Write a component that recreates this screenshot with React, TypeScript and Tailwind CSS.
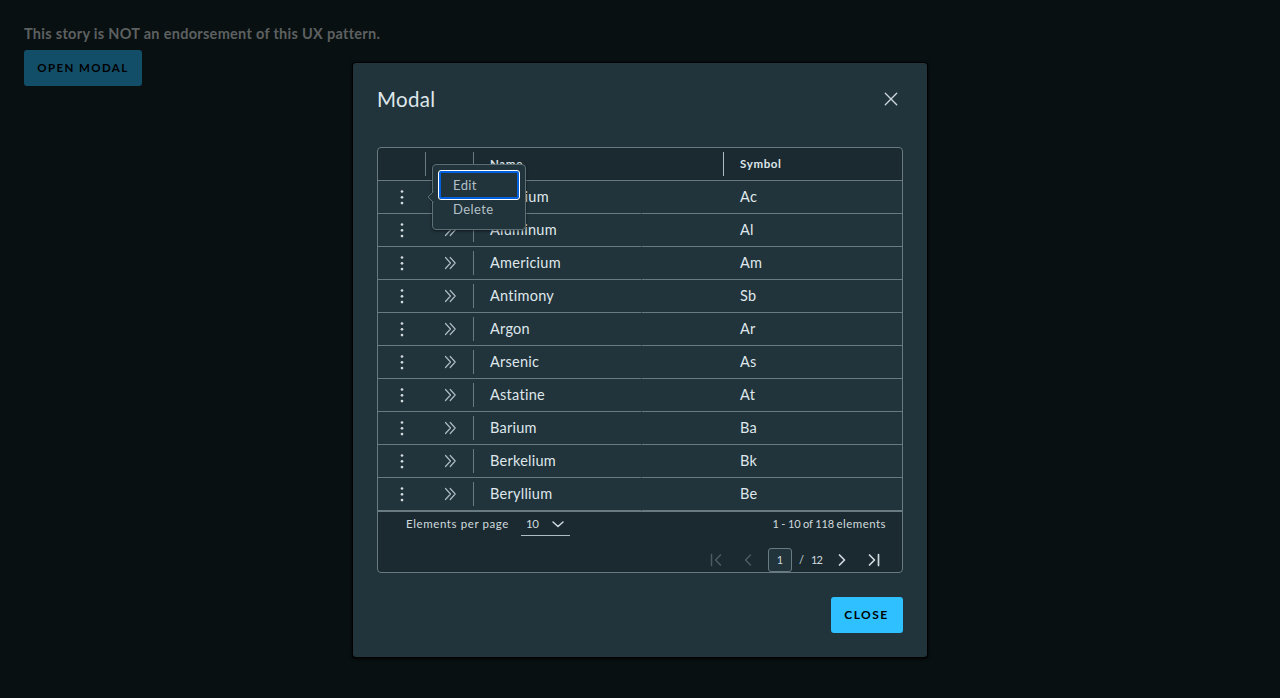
import React from "react";

const ROWS: [string, string][] = [
  ["Actinium", "Ac"],
  ["Aluminum", "Al"],
  ["Americium", "Am"],
  ["Antimony", "Sb"],
  ["Argon", "Ar"],
  ["Arsenic", "As"],
  ["Astatine", "At"],
  ["Barium", "Ba"],
  ["Berkelium", "Bk"],
  ["Beryllium", "Be"],
];

function Icon({ d, className, size = 16, width = 1.5 }: { d: string; className: string; size?: number; width?: number }) {
  return (
    <svg width={size} height={size} viewBox={`0 0 ${size} ${size}`} className={className} fill="none" stroke="currentColor" strokeWidth={width} strokeLinecap="round" strokeLinejoin="round">
      <path d={d} />
    </svg>
  );
}

function Dots() {
  return (
    <svg width="16" height="16" viewBox="0 0 16 16" className="text-[#d3dbdf]" fill="currentColor">
      <circle cx="8" cy="2.5" r="1.35" />
      <circle cx="8" cy="8.3" r="1.35" />
      <circle cx="8" cy="14.1" r="1.35" />
    </svg>
  );
}

function ActionMenu() {
  return (
    <div className="absolute left-[54px] top-[16px] z-10 h-[66px] w-[94px] rounded-[4px] border border-[#5c6f76] bg-[#21333b] px-[5px] pt-[5px] text-[13px] tracking-[0.4px] text-[#b3c0c7] shadow-[0_1px_3px_#0008]">
      <svg width="7" height="12" viewBox="0 0 7 12" className="absolute -left-[6px] top-[26px]">
        <path d="M6.5 0.5 L1 6 L6.5 11.5" fill="#21333b" stroke="#5c6f76" />
      </svg>
      <div className="flex h-[30px] w-[82px] items-center rounded-[3px] border border-white pl-[14px] pt-[2px] shadow-[inset_0_0_0_2px_#0061e0]">Edit</div>
      <div className="flex h-[19px] items-center pl-[15px]">Delete</div>
    </div>
  );
}

export default function App() {
  return (
    <div className="flex h-[698px] w-full flex-col items-start overflow-hidden bg-[#091012] px-6 pt-6 font-['Lato','Liberation_Sans',sans-serif]">
      <p className="h-[20px] whitespace-nowrap text-[14.5px] font-bold leading-[20px] tracking-[0.29px] text-[#5d6060]">This story is NOT an endorsement of this UX pattern.</p>
      <button className="mt-[6px] h-9 w-[118px] rounded-[3px] bg-[#134e68] text-[11.5px] font-bold tracking-[1.4px] text-black">OPEN MODAL</button>

      <div role="dialog" className="absolute left-[353px] top-[63px] flex h-[594px] w-[574px] flex-col rounded-[3px] bg-[#21333b] p-6 text-[#dfe7eb] shadow-[0_0_0_1px_#000,0_1px_3px_1px_#000]">
        <header className="flex h-6 items-center justify-between">
          <h1 className="text-[20.5px] leading-6 tracking-[0.3px]">Modal</h1>
          <Icon className="mr-1 text-[#cfd9dd]" width={1.3} d="M2.3 2.3 L13.7 13.7 M13.7 2.3 L2.3 13.7" />
        </header>

        <section className="relative mt-9 flex h-[426px] flex-col rounded-[4px] border border-[#6a7a81] bg-[#1b2a31]">
          <div className="flex h-[33px] items-center border-b border-[#6a7a81] text-[11.5px] font-bold tracking-[0.65px]">
            <div className="h-6 w-12 border-r border-[#6a7a81]" />
            <div className="h-6 w-12 border-r border-[#6a7a81]" />
            <div className="flex h-6 w-[250px] items-center border-r border-[#adbbc4] pl-4">Name</div>
            <div className="pl-4">Symbol</div>
          </div>
          {ROWS.map(([name, symbol]) => (
            <div key={name} className="relative flex h-[33px] shrink-0 items-center border-b border-[#6a7a81] bg-[#21333b] text-[14.5px] tracking-[0.26px]">
              <div className="flex w-12 justify-center"><Dots /></div>
              <div className="flex h-6 w-12 items-center justify-center border-r border-[#6a7a81]">
                <Icon className="text-[#adbbc4]" width={1.2} d="M3.5 2.5 L8.5 8 L3.5 13.5 M8.2 2.5 L13.2 8 L8.2 13.5" />
              </div>
              <div className="w-[250px] pl-4">{name}</div>
              <div className="pl-4">{symbol}</div>
              <span className="absolute -bottom-px left-[263px] h-px w-px bg-[#43545b]" />
            </div>
          ))}
          <footer className="flex grow flex-col border-t border-[#6a7a81] text-[11.5px] text-[#d0dade]">
            <div className="flex h-6 items-center justify-between pl-7 pr-4">
              <div className="flex items-center">
                <span className="w-[115px] whitespace-nowrap tracking-[0.6px]">Elements per page</span>
                <div className="flex h-6 w-[49px] items-center justify-between border-b border-[#adbbc4] pl-[5px] pr-1">
                  <span className="tracking-[-0.4px]">10</span>
                  <Icon className="text-[#d0dade]" d="M3 6 L8 10.5 L13 6" />
                </div>
              </div>
              <span className="text-[11px] tracking-[-0.15px]">1 - 10 of 118 <span className="text-[11.5px] tracking-[0.45px]">elements</span></span>
            </div>
            <div className="mt-3 flex h-6 items-center pl-[330px] text-[11px]">
              <Icon className="text-[#4b5c64]" d="M3.5 2.5 V13.5 M12.5 3 L7.5 8 L12.5 13" />
              <Icon className="ml-4 text-[#4b5c64]" d="M10.5 3 L5.5 8 L10.5 13" />
              <div className="ml-3 flex h-6 w-6 items-center justify-center rounded-[3px] border border-[#6a7a81] bg-[#21333b]">1</div>
              <span className="ml-[7px] w-[5px]">/</span>
              <span className="ml-[7px] w-[12px] tracking-[-0.9px]">12</span>
              <Icon className="ml-[11px]" width={1.7} d="M5.5 3 L10.5 8 L5.5 13" />
              <Icon className="ml-4" width={1.7} d="M3.5 3 L8.5 8 L3.5 13 M12.5 2.5 V13.5" />
            </div>
          </footer>
          <ActionMenu />
        </section>

        <div className="mt-6 flex justify-end">
          <button className="h-9 w-[72px] rounded-[3px] bg-[#2ec0ff] pr-[1px] text-[12px] font-bold tracking-[1.5px] text-black">CLOSE</button>
        </div>
      </div>
    </div>
  );
}
